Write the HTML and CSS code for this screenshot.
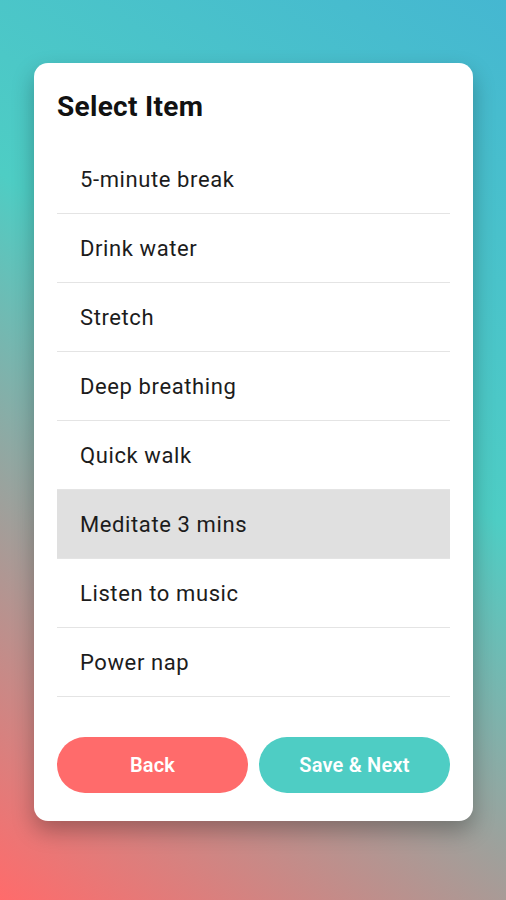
FILE: index.html
```html
<!DOCTYPE html>
<html lang="en">
<head>
<meta charset="utf-8">
<title>Select Item</title>
<link rel="stylesheet" href="styles.css">
</head>
<body>
  <main class="screen">
    <section class="card">
      <h1 class="title">Select Item</h1>
      <ul class="list">
        <li class="item">5-minute break</li>
        <li class="item">Drink water</li>
        <li class="item">Stretch</li>
        <li class="item">Deep breathing</li>
        <li class="item">Quick walk</li>
        <li class="item item--selected">Meditate 3 mins</li>
        <li class="item">Listen to music</li>
        <li class="item">Power nap</li>
      </ul>
      <div class="actions">
        <button class="btn btn--back" type="button">Back</button>
        <button class="btn btn--next" type="button">Save &amp; Next</button>
      </div>
    </section>
  </main>
</body>
</html>
```
FILE: styles.css
```css
html, body {
  margin: 0;
  padding: 0;
  height: 100%;
}

body {
  font-family: Roboto, "Liberation Sans", Arial, sans-serif;
  background: linear-gradient(215deg, #45b7d1 0%, #4ecdc4 42%, #ff6b6b 100%);
  min-height: 100vh;
}

.screen {
  display: flex;
  flex-direction: column;
  padding: 63px 33px 0 34px;
  box-sizing: border-box;
  min-height: 100vh;
}

.card {
  background: #ffffff;
  border-radius: 14px;
  padding: 27px 23px 28px;
  box-shadow: 0 10px 22px rgba(0, 0, 0, 0.28);
}

.title {
  margin: 0 0 21px;
  font-size: 28px;
  line-height: 34px;
  font-weight: 700;
  letter-spacing: 0.3px;
  color: #111111;
}

.list {
  list-style: none;
  margin: 0;
  padding: 0;
}

.item {
  height: 68px;
  display: flex;
  align-items: center;
  padding: 0 23px;
  font-size: 22px;
  color: #1c1c1c;
  border-bottom: 1px solid #e4e4e4;
  letter-spacing: 0.6px;
}

.item--selected {
  background: #e0e0e0;
}

.actions {
  display: flex;
  gap: 11px;
  margin-top: 40px;
}

.btn {
  flex: 1;
  height: 56px;
  border: none;
  border-radius: 28px;
  color: #ffffff;
  font-family: Roboto, "Liberation Sans", Arial, sans-serif;
  font-size: 20px;
  font-weight: 600;
  letter-spacing: 0.2px;
  padding: 0;
}

.btn--back {
  background: #ff6b6b;
}

.btn--next {
  background: #4ecdc4;
}
```
